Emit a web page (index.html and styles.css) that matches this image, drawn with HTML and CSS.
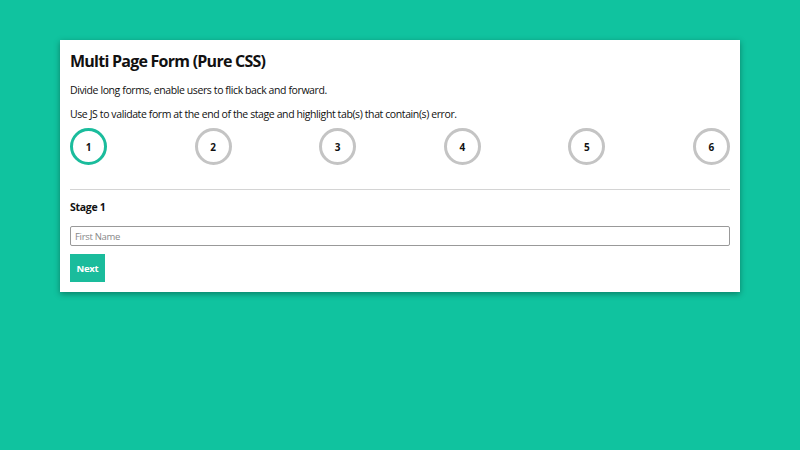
FILE: index.html
```html
<!DOCTYPE html>
<html>
<head>
<meta charset="utf-8">
<link rel="stylesheet" href="styles.css">
</head>
<body>
<div class="card">
  <h1 class="title">Multi Page Form (Pure CSS)</h1>
  <p class="text">Divide long forms, enable users to flick back and forward.</p>
  <p class="text last">Use JS to validate form at the end of the stage and highlight tab(s) that contain(s) error.</p>
  <div class="steps">
    <div class="step active">1</div>
    <div class="step">2</div>
    <div class="step">3</div>
    <div class="step">4</div>
    <div class="step">5</div>
    <div class="step">6</div>
  </div>
  <hr class="divider">
  <h2 class="stage">Stage 1</h2>
  <input class="field" type="text" placeholder="First Name">
  <button class="next">Next</button>
</div>
</body>
</html>
```
FILE: styles.css
```css
html, body {
  margin: 0;
  padding: 0;
}
body {
  background: #10c39f;
  font-family: "Open Sans", "Noto Sans", sans-serif;
  color: #111;
  padding: 40px 60px;
  height: 450px;
  box-sizing: border-box;
}
.card {
  background: #fff;
  padding: 10px 10px 10px;
  box-shadow: 0 2px 6px rgba(0,0,0,0.35);
  display: flex;
  flex-direction: column;
}
.title {
  font-size: 16px;
  font-weight: 700;
  letter-spacing: -0.75px;
  margin: 0 0 10px;
  line-height: 22px;
}
.text {
  font-size: 10.5px;
  letter-spacing: -0.4px;
  margin: 0 0 8px;
  line-height: 16px;
}
.text.last {
  margin-bottom: 6px;
}
.steps {
  display: flex;
  justify-content: space-between;
}
.step {
  width: 37px;
  height: 37px;
  box-sizing: border-box;
  border: 3px solid #c4c4c4;
  border-radius: 50%;
  display: flex;
  align-items: center;
  justify-content: center;
  font-size: 10px;
  font-weight: 700;
}
.step.active {
  border-color: #1abc9c;
}
.divider {
  border: 0;
  border-top: 1px solid #d4d4d4;
  margin: 24px 0 0;
  width: 100%;
}
.stage {
  font-size: 10.5px;
  font-weight: 700;
  letter-spacing: -0.3px;
  margin: 9px 0 11px;
  line-height: 16px;
}
.field {
  height: 20px;
  box-sizing: border-box;
  border: 1px solid #999;
  border-radius: 2px;
  padding: 0 4px;
  font-family: inherit;
  font-size: 9.5px;
  letter-spacing: -0.3px;
  margin: 0 0 8px;
}
.field::placeholder {
  color: #888;
}
.next {
  align-self: flex-start;
  width: 35px;
  height: 28px;
  background: #1abc9c;
  color: #fff;
  border: 0;
  font-family: inherit;
  font-weight: 700;
  font-size: 9.5px;
  letter-spacing: -0.3px;
  padding: 0;
}
```
